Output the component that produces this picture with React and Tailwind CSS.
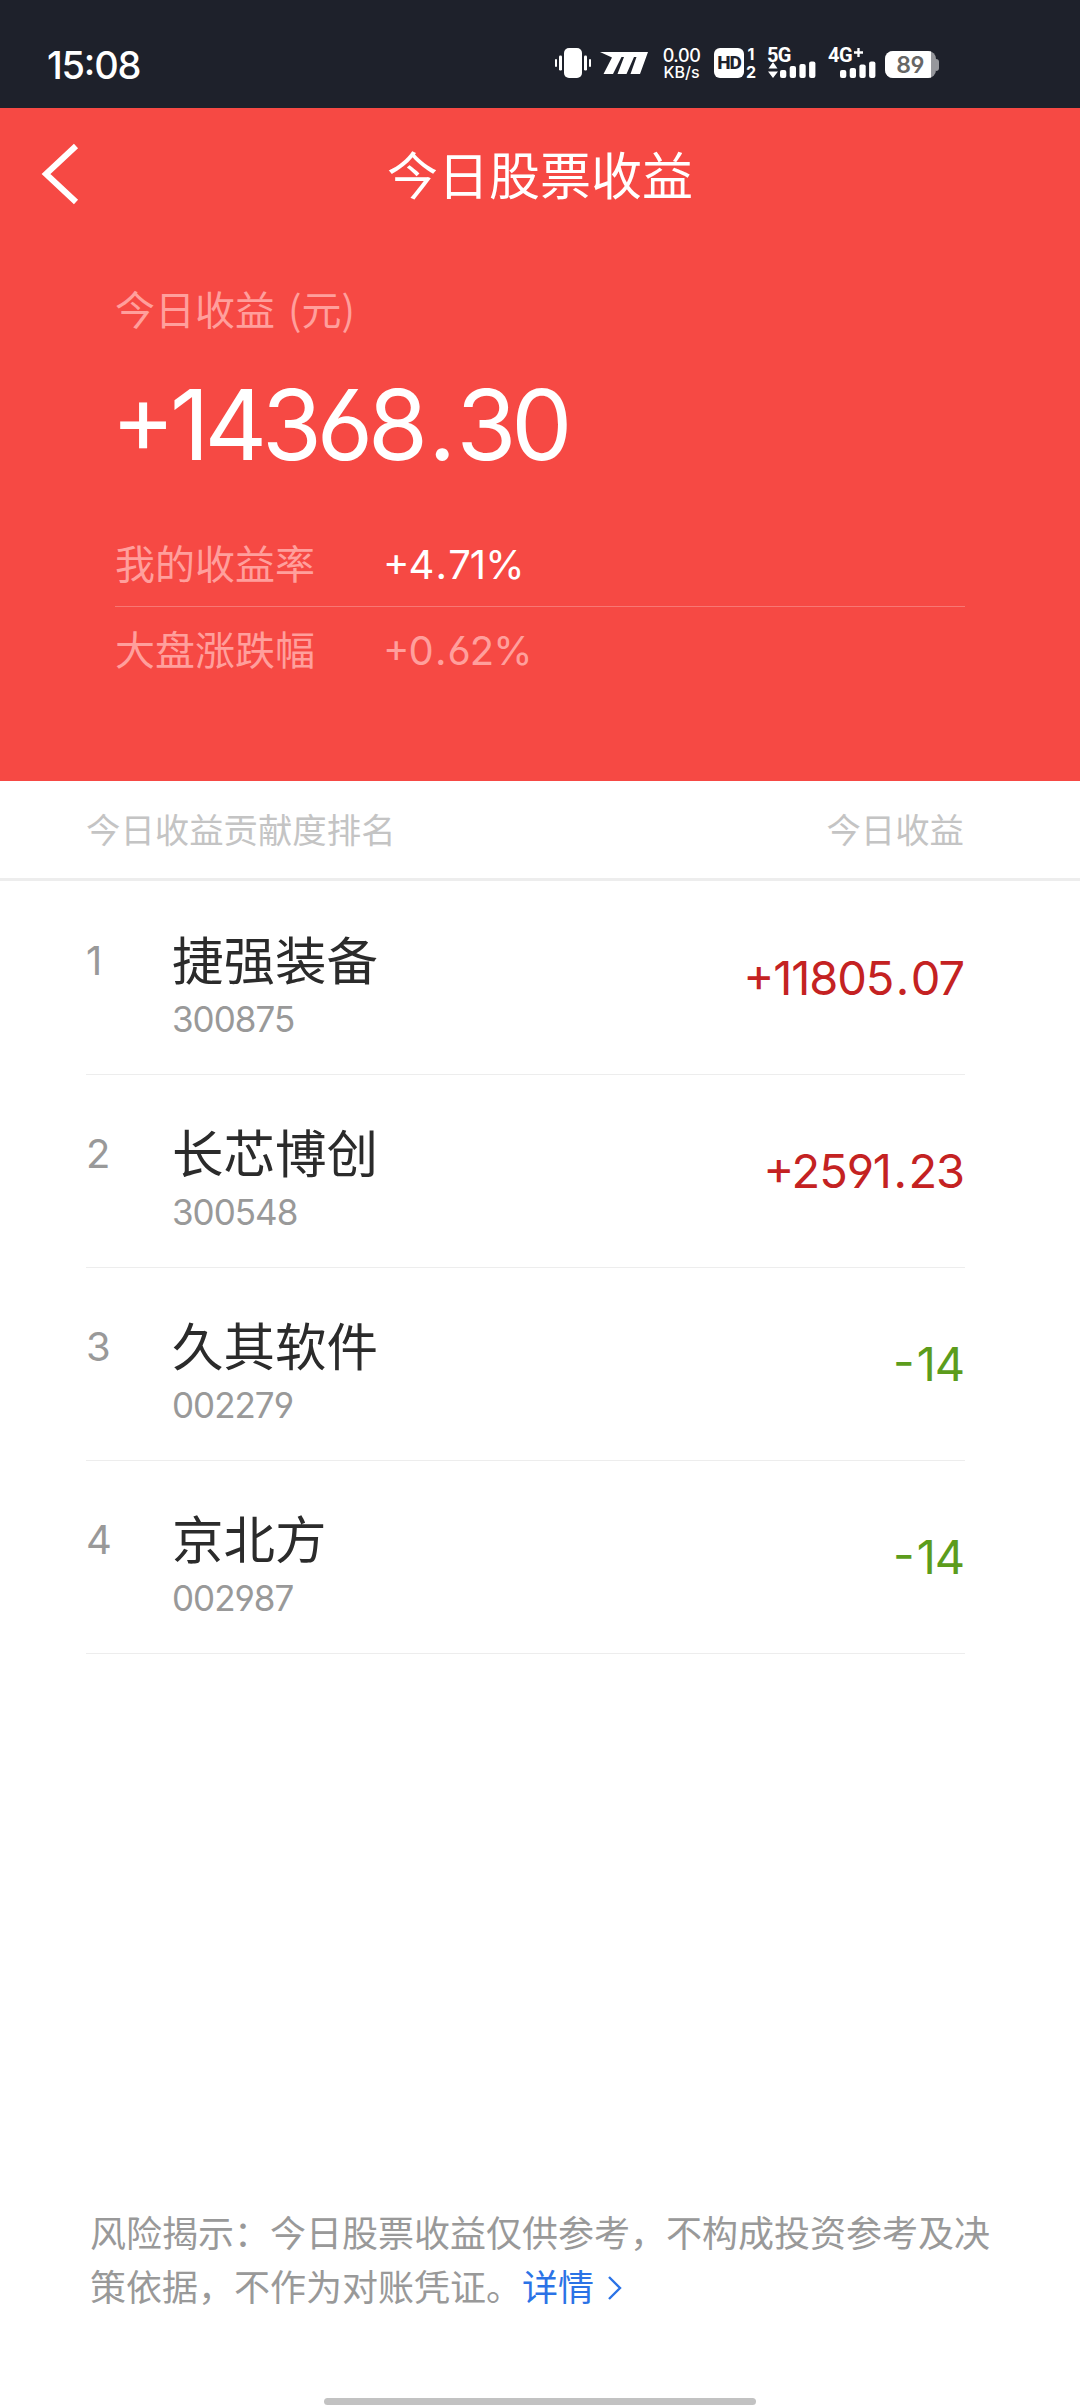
import React from "react";

const NUM = "font-['Inter','Noto_Sans_CJK_SC',sans-serif] [font-feature-settings:'cv03','cv04','case']";

const stocks = [
  { rank: 1, name: "捷强装备", code: "300875", amount: "+11805.07", up: true },
  { rank: 2, name: "长芯博创", code: "300548", amount: "+2591.23", up: true },
  { rank: 3, name: "久其软件", code: "002279", amount: "-14", up: false },
  { rank: 4, name: "京北方", code: "002987", amount: "-14", up: false },
];

/* Figures with a little air round the decimal point and after a minus sign. */
function Figure({ value, className }) {
  const minus = value.startsWith("-");
  const [whole, fraction] = (minus ? value.slice(1) : value).split(".");
  return (
    <span className={`${NUM} ${className}`}>
      {minus && <span className="mr-[0.07em]">-</span>}
      {whole}
      {fraction !== undefined && <span className="mx-[0.055em]">.</span>}
      {fraction}
    </span>
  );
}

function VibrateIcon() {
  return (
    <svg width="36" height="30" viewBox="0 0 36 30" fill="#fff">
      <rect x="0" y="11" width="2" height="8" rx="1" />
      <rect x="4" y="7.5" width="3" height="15" rx="1.2" />
      <rect x="9" y="0" width="18" height="30" rx="5" />
      <rect x="29" y="7.5" width="3" height="15" rx="1.2" />
      <rect x="34" y="11" width="2" height="8" rx="1" />
    </svg>
  );
}

function BrandIcon() {
  return (
    <svg width="48" height="22" viewBox="0 0 48 22" fill="#fff">
      <path d="M0 0H48L40 22H30.5L36.5 5H34L26.5 22H17.5L24 5H21.5L13 22H3.5L12 5.5L0 0Z" />
    </svg>
  );
}

function Bars({ heights }) {
  return (
    <svg width="36" height="17" viewBox="0 0 36 17" fill="#fff">
      {heights.map((h, i) => (
        <rect key={i} x={i * 9.7} y={17 - h} width="6.3" height={h} rx="2" />
      ))}
    </svg>
  );
}

function StatusBar() {
  return (
    <header className="flex h-[108px] items-start bg-[#1e212b] pl-[47px] text-white">
      <div className={`${NUM} mt-[42px] w-[508px] text-[38px] leading-[46px] font-medium tracking-[-1.2px]`}>15:08</div>
      <div className={`${NUM} mt-[48px] flex h-[30px] items-center`}>
        <VibrateIcon />
        <div className="ml-[9px]"><BrandIcon /></div>
        <div className="ml-[14px] flex w-[39px] flex-col items-center pt-px font-medium whitespace-nowrap">
          <span className="text-[18px] leading-[16px] tracking-[-0.4px]">0.00</span>
          <span className="text-[16px] leading-[16px]">KB/s</span>
        </div>
        <div className="ml-[13px] flex h-[30px] w-[30px] items-center justify-center rounded-[6px] bg-white font-['Roboto',sans-serif] text-[19px] leading-[30px] font-extrabold tracking-[-1px] text-[#1e212b]">HD</div>
        <div className="ml-[1px] flex w-[12px] flex-col items-center text-[16px] leading-[18px] font-bold">
          <span>1</span>
          <span>2</span>
        </div>
        <div className="relative ml-[10px] h-[30px] w-[49px]">
          <span className="absolute -top-[1px] left-0 font-['Roboto',sans-serif] text-[20px] leading-[17px] font-bold tracking-[-0.8px]">5G</span>
          <svg className="absolute bottom-0 left-0" width="12" height="16" viewBox="0 0 12 16" fill="#fff">
            <path d="M6 0L10.5 6.5H1.5ZM1 9.5H11L6 16Z" />
          </svg>
          <div className="absolute right-0 bottom-0"><Bars heights={[8, 12, 14, 16.5]} /></div>
        </div>
        <div className="relative ml-[12px] h-[30px] w-[48px]">
          <span className="absolute -top-[1px] left-0 font-['Roboto',sans-serif] text-[20px] leading-[17px] font-bold tracking-[-0.4px]">4G</span>
          <svg className="absolute top-0 left-[26px]" width="9" height="9" viewBox="0 0 10 10" fill="#fff">
            <path d="M3.7 0H6.3V3.7H10V6.3H6.3V10H3.7V6.3H0V3.7H3.7Z" />
          </svg>
          <div className="absolute right-0 bottom-0"><Bars heights={[8, 10, 13.5, 16.5]} /></div>
        </div>
        <div className="mt-[3px] ml-[9px] flex items-center">
          <div className="flex h-[27px] w-[51px] overflow-hidden rounded-[8px] bg-[#96979c]">
            <div className="w-[46px] bg-white pl-[4px] text-center text-[23px] leading-[28px] font-semibold tracking-[-0.5px] text-[#666]">89</div>
          </div>
          <div className="h-[12px] w-[3px] rounded-r-[3px] bg-[#96979c]" />
        </div>
      </div>
    </header>
  );
}

function Summary() {
  return (
    <section className="h-[673px] bg-[#f64944] text-white">
      <div className="grid h-[132px] grid-cols-[120px_1fr_120px] items-center">
        <svg className="ml-[38px]" width="44" height="64" viewBox="0 0 44 64" fill="none" stroke="#fff" strokeWidth="6">
          <path d="M38 4L8 32L38 60" />
        </svg>
        <h1 className="-mt-[3px] text-center text-[51px] leading-[72px]">今日股票收益</h1>
      </div>
      <div className="mr-[115px] ml-[115px]">
        <div className="mt-[38px] text-[40px] leading-[60px] [word-spacing:4px] whitespace-pre text-[#ff9f9c]">今日收益 (元)</div>
        <Figure value="+14368.30" className="mt-[32px] -ml-[4px] block text-[97px] leading-[110px] font-normal tracking-[-5.1px]" />
        <div className="flex h-[127px] items-center border-b border-[#f87773] pt-[40px] text-[40px] leading-[60px]">
          <span className="w-[268px] -translate-y-px text-[#ff9f9c]">我的收益率</span>
          <Figure value="+4.71%" className="translate-y-[2px] tracking-[-1px]" />
        </div>
        <div className="mt-[12px] flex items-center text-[40px] leading-[60px] text-[#ff9f9c]">
          <span className="w-[268px] -translate-y-px">大盘涨跌幅</span>
          <Figure value="+0.62%" className="translate-y-[2px] tracking-[-1px]" />
        </div>
      </div>
    </section>
  );
}

function StockRow({ stock }) {
  return (
    <li className="flex h-[193px] border-b border-[#ededed]">
      <span className={`${NUM} mt-[54px] w-[86px] text-[40px] leading-[50px] text-[#999]`}>{stock.rank}</span>
      <div className="flex-1">
        <div className="mt-[40px] text-[51.5px] leading-[72px] text-[#2b2b2b]">{stock.name}</div>
        <div className={`${NUM} mt-[3px] text-[35px] leading-[44px] tracking-[-1px] text-[#999]`}>{stock.code}</div>
      </div>
      <Figure
        value={stock.amount}
        className={`mt-[66px] mr-px text-[47px] leading-[60px] tracking-[-1.1px] ${stock.up ? "text-[#c42222]" : "text-[#5c9c1c]"}`}
      />
    </li>
  );
}

export default function App() {
  return (
    <div className="flex h-[2408px] w-[1080px] flex-col overflow-hidden bg-white font-['Noto_Sans_CJK_SC',sans-serif]">
      <StatusBar />
      <Summary />
      <div className="flex h-[100px] shrink-0 items-center justify-between border-b-[3px] border-[#ededed] pr-[116px] pb-[2px] pl-[86px] text-[34.4px] text-[#c4c4c4]">
        <span>今日收益贡献度排名</span>
        <span>今日收益</span>
      </div>
      <ul className="mr-[115px] ml-[86px] pt-px">
        {stocks.map((stock) => (
          <StockRow key={stock.rank} stock={stock} />
        ))}
      </ul>
      <footer className="mt-auto">
        <p className="mr-[80px] mb-[86px] ml-[90px] text-[36px] leading-[54px] text-[#999]">
          风险揭示：今日股票收益仅供参考，不构成投资参考及决
          <br />
          策依据，不作为对账凭证。
          <a className="text-[#2b73e6]">
            详情
            <svg className="ml-[12px] inline-block align-[0px]" width="18" height="26" viewBox="0 0 18 26" fill="none" stroke="currentColor" strokeWidth="2.4">
              <path d="M3 2L14 13L3 24" />
            </svg>
          </a>
        </p>
        <div className="mx-auto mb-[3px] h-[7px] w-[432px] rounded-full bg-[#c2c2c2]" />
      </footer>
    </div>
  );
}
